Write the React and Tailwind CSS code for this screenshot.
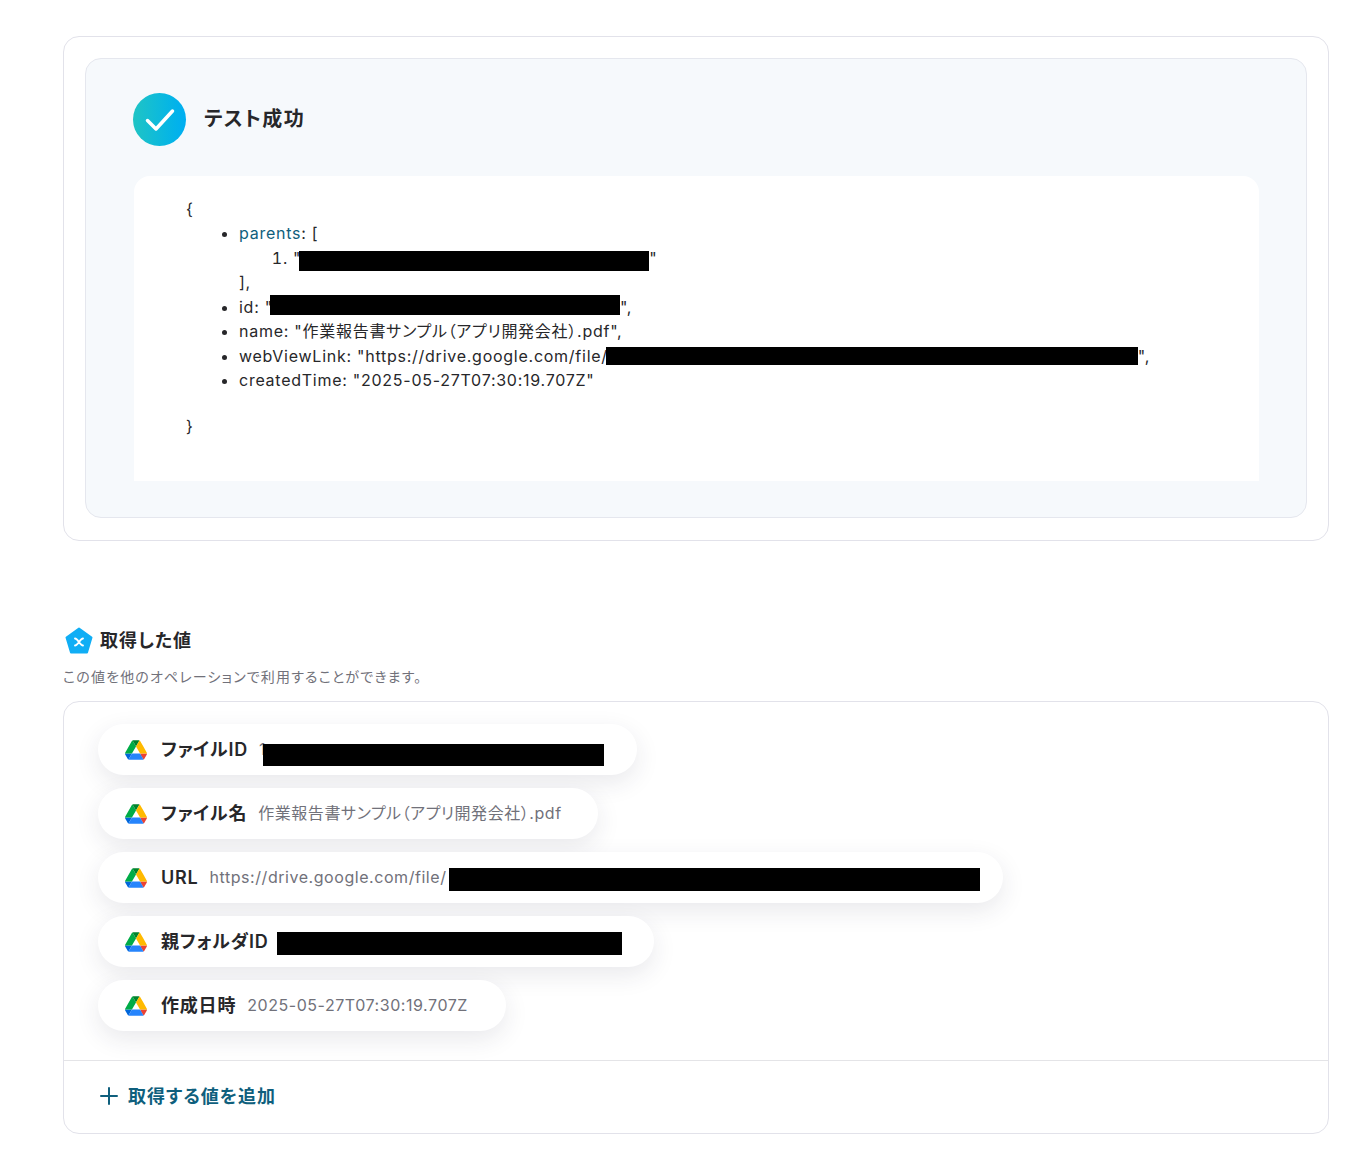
function DriveIcon() {
  return (
    <svg viewBox="0 0 87.3 78" className="w-[22px] h-[20px] shrink-0">
      <path d="m6.6 66.85 3.85 6.65c.8 1.4 1.95 2.5 3.3 3.3l13.75-23.8h-27.5c0 1.55.4 3.1 1.2 4.5z" fill="#0066da" />
      <path d="m43.65 25-13.75-23.8c-1.35.8-2.5 1.9-3.3 3.3l-25.4 44a9.06 9.06 0 0 0 -1.2 4.5h27.5z" fill="#00ac47" />
      <path d="m73.55 76.8c1.35-.8 2.5-1.9 3.3-3.3l1.6-2.75 7.65-13.25c.8-1.4 1.2-2.95 1.2-4.5h-27.502l5.852 11.5z" fill="#ea4335" />
      <path d="m43.65 25 13.75-23.8c-1.35-.8-2.9-1.2-4.5-1.2h-18.5c-1.6 0-3.15.45-4.5 1.2z" fill="#00832d" />
      <path d="m59.8 53h-32.3l-13.75 23.8c1.35.8 2.9 1.2 4.5 1.2h50.8c1.6 0 3.15-.45 4.5-1.2z" fill="#2684fc" />
      <path d="m73.4 26.5-12.7-22c-.8-1.4-1.95-2.5-3.3-3.3l-13.75 23.8 16.15 28h27.45c0-1.55-.4-3.1-1.2-4.5z" fill="#ffba00" />
    </svg>
  );
}

function Pill({ label, width, children }) {
  return (
    <div className={`${width} h-[51px] flex items-center pl-[27px] bg-white rounded-full shadow-[0_8px_24px_rgba(40,40,70,0.1)]`}>
      <DriveIcon />
      <span className="ml-[14px] text-[18px] tracking-[0.8px] font-semibold text-[#27272a] whitespace-nowrap">{label}</span>
      <span className="ml-[11px] mb-[2px] text-[16px] tracking-[0.55px] text-[#71717a] whitespace-nowrap flex items-center">{children}</span>
    </div>
  );
}

export default function App() {
  return (
    <div className="min-h-[1168px] bg-white pt-[36px] pl-[63px] pr-[37px] text-[#27272a] [font-feature-settings:'palt'] font-['Inter','Noto_Sans_CJK_JP',sans-serif]">
      {/* test result */}
      <div className="h-[505px] border border-[#e2e2ea] rounded-[16px] p-[21px]">
        <div className="h-[460px] bg-[#f6f9fc] border border-[#e5e7ee] rounded-[16px] pl-[47px] pr-[47px] pt-[34px]">
          <div className="flex items-center h-[53px]">
            <div className="w-[53px] h-[53px] rounded-full bg-gradient-to-r from-[#1fc4c4] to-[#00aef2] flex items-center justify-center">
              <svg viewBox="0 0 32 32" className="w-[32px] h-[32px]" fill="none" stroke="white" strokeWidth="3.5" strokeLinecap="round" strokeLinejoin="round">
                <path d="M3.5 16.5 12 25 28.5 7" />
              </svg>
            </div>
            <h2 className="ml-[18px] mb-[2px] text-[20px] tracking-[1.4px] font-semibold">テスト成功</h2>
          </div>
          <div className="mt-[30px] ml-[1px] h-[305px] w-[1125px] bg-white rounded-t-[16px] pl-[52px] pt-[21px] text-[16px] leading-[24.5px] tracking-[0.74px]">
            <div>{'{'}</div>
            <ul className="list-disc pl-[53px] -mt-[0.5px]">
              <li>
                <span className="text-[#0f5f7d]">parents</span>: [
                <ol className="list-decimal pl-[54px]">
                  <li>
                    "<span className="inline-block w-[350px] h-[20px] bg-black align-[-3px] -my-[4px] -ml-[2px]"></span>"
                  </li>
                </ol>
                <div>],</div>
              </li>
              <li>
                id: "<span className="inline-block w-[350px] h-[20px] bg-black align-[2px] -my-[4px] -ml-[3px]"></span>",
              </li>
              <li>name: "作業報告書サンプル（アプリ開発会社）.pdf",</li>
              <li>
                webViewLink: "https://drive.google.com/file/<span className="inline-block w-[532px] h-[18px] bg-black align-[1px] -my-[4px] -ml-[2px]"></span>",
              </li>
              <li>createdTime: "2025-05-27T07:30:19.707Z"</li>
            </ul>
            <div className="mt-[21.5px]">{'}'}</div>
          </div>
        </div>
      </div>

      {/* obtained values */}
      <div className="mt-[86px] flex items-center h-[27px]">
        <svg viewBox="0 0 28 28" className="w-[28px] h-[28px] ml-[2px] shrink-0">
          <path d="M14 1.5 26.5 10.5 22 25.5H6L1.5 10.5Z" fill="#10aef5" stroke="#10aef5" strokeWidth="2" strokeLinejoin="round" />
          <path d="M10 11.5 C13 11.5 15 18.5 18 18.5M18 11.5 C15 11.5 13 18.5 10 18.5" stroke="white" strokeWidth="1.9" strokeLinecap="round" fill="none" />
        </svg>
        <h3 className="ml-[7px] text-[18px] tracking-[1px] font-semibold">取得した値</h3>
      </div>
      <p className="mt-[13px] h-[20px] text-[14px] tracking-[1.15px] leading-[20px] text-[#71717a]">この値を他のオペレーションで利用することができます。</p>

      <div className="mt-[14px] h-[433px] border border-[#e2e2ea] rounded-[16px] flex flex-col">
        <div className="h-[359px] pt-[22px] pl-[34px] flex flex-col gap-[13px] border-b border-[#e4e4e7]">
          <Pill label="ファイルID" width="w-[539px]">
            1<span className="inline-block w-[341px] h-[22px] bg-black -ml-[3px] mt-[12px]"></span>
          </Pill>
          <Pill label="ファイル名" width="w-[500px]">作業報告書サンプル（アプリ開発会社）.pdf</Pill>
          <Pill label="URL" width="w-[905px]">
            https://drive.google.com/file/
            <span className="inline-block w-[531px] h-[23px] bg-black ml-[3px] mt-[5px]"></span>
          </Pill>
          <Pill label="親フォルダID" width="w-[556px]">
            <span className="inline-block w-[345px] h-[23px] bg-black -ml-[3px] mt-[5px]"></span>
          </Pill>
          <Pill label="作成日時" width="w-[408px]">2025-05-27T07:30:19.707Z</Pill>
        </div>
        <button className="flex items-center h-[70px] pl-[36px] text-[#0f5f7d] text-[18px] tracking-[1px] font-semibold">
          <svg viewBox="0 0 18 18" className="w-[18px] h-[18px]" stroke="currentColor" strokeWidth="2" strokeLinecap="round">
            <path d="M9 1v16M1 9h16" />
          </svg>
          <span className="ml-[10px]">取得する値を追加</span>
        </button>
      </div>
    </div>
  );
}
